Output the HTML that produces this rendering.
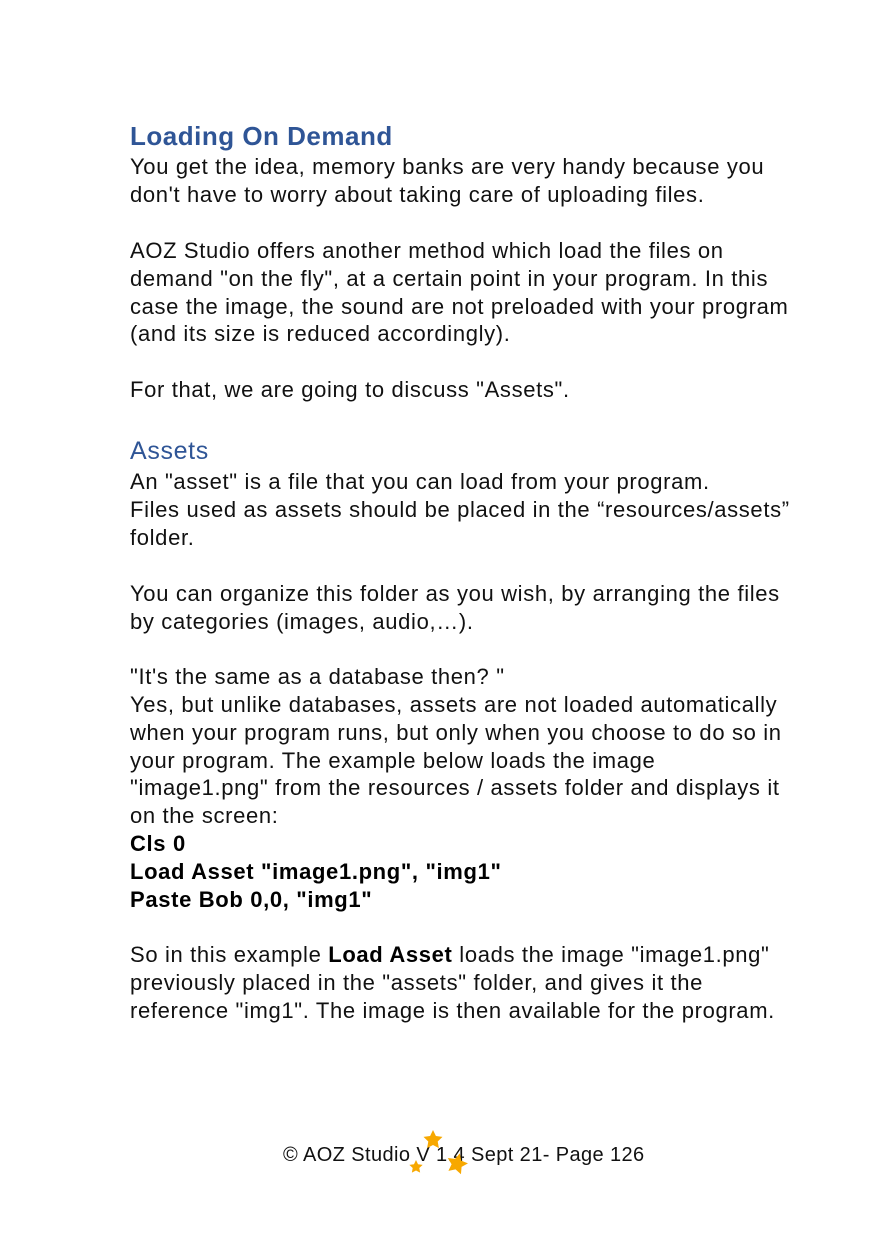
<!DOCTYPE html>
<html><head><meta charset="utf-8"><style>
body{margin:0;background:#fff;width:873px;height:1240px;position:relative;overflow:hidden;font-family:"Liberation Sans",sans-serif;color:#111;}
.l{position:absolute;left:130px;font-size:22px;line-height:28px;white-space:nowrap;letter-spacing:0.65px}
.h{color:#2f5596;font-weight:bold;font-size:26px;letter-spacing:0.5px}
.h2{color:#2f5596;font-size:25px}
b{font-weight:bold;color:#000}
</style></head><body>
<div class="l h" style="top:122px">Loading On Demand</div>
<div class="l" style="top:153px">You get the idea, memory banks are very handy because you</div>
<div class="l" style="top:181px">don't have to worry about taking care of uploading files.</div>
<div class="l" style="top:237px">AOZ Studio offers another method which load the files on</div>
<div class="l" style="top:265px">demand "on the fly", at a certain point in your program. In this</div>
<div class="l" style="top:293px">case the image, the sound are not preloaded with your program</div>
<div class="l" style="top:320px">(and its size is reduced accordingly).</div>
<div class="l" style="top:376px">For that, we are going to discuss "Assets".</div>
<div class="l h2" style="top:437px">Assets</div>
<div class="l" style="top:468px">An "asset" is a file that you can load from your program.</div>
<div class="l" style="top:496px">Files used as assets should be placed in the “resources/assets”</div>
<div class="l" style="top:524px">folder.</div>
<div class="l" style="top:580px">You can organize this folder as you wish, by arranging the files</div>
<div class="l" style="top:608px">by categories (images, audio,…).</div>
<div class="l" style="top:663px">"It's the same as a database then? "</div>
<div class="l" style="top:691px">Yes, but unlike databases, assets are not loaded automatically</div>
<div class="l" style="top:719px">when your program runs, but only when you choose to do so in</div>
<div class="l" style="top:747px">your program. The example below loads the image</div>
<div class="l" style="top:774px">"image1.png" from the resources / assets folder and displays it</div>
<div class="l" style="top:802px">on the screen:</div>
<div class="l" style="top:830px"><b>Cls 0</b></div>
<div class="l" style="top:858px"><b>Load Asset "image1.png", "img1"</b></div>
<div class="l" style="top:886px"><b>Paste Bob 0,0, "img1"</b></div>
<div class="l" style="top:941px">So in this example <b>Load Asset</b> loads the image "image1.png"</div>
<div class="l" style="top:969px">previously placed in the "assets" folder, and gives it the</div>
<div class="l" style="top:997px">reference "img1". The image is then available for the program.</div>
<div class="l" style="top:1141px;left:283px;font-size:20px;letter-spacing:0.4px">© AOZ Studio V 1.4 Sept 21- Page 126</div>
<svg style="position:absolute;left:0;top:0" width="873" height="1240">
<defs><polygon id="s" points="0,-10 2.9,-4 9.5,-3.1 4.7,1.5 5.9,8.1 0,5 -5.9,8.1 -4.7,1.5 -9.5,-3.1 -2.9,-4" fill="#f7a800"/></defs>
<use href="#s" transform="translate(433,1140) scale(1)"/>
<use href="#s" transform="translate(416,1167) scale(0.7)"/>
<use href="#s" transform="translate(457,1164) scale(1.1) rotate(15)"/>
</svg>
</body></html>
